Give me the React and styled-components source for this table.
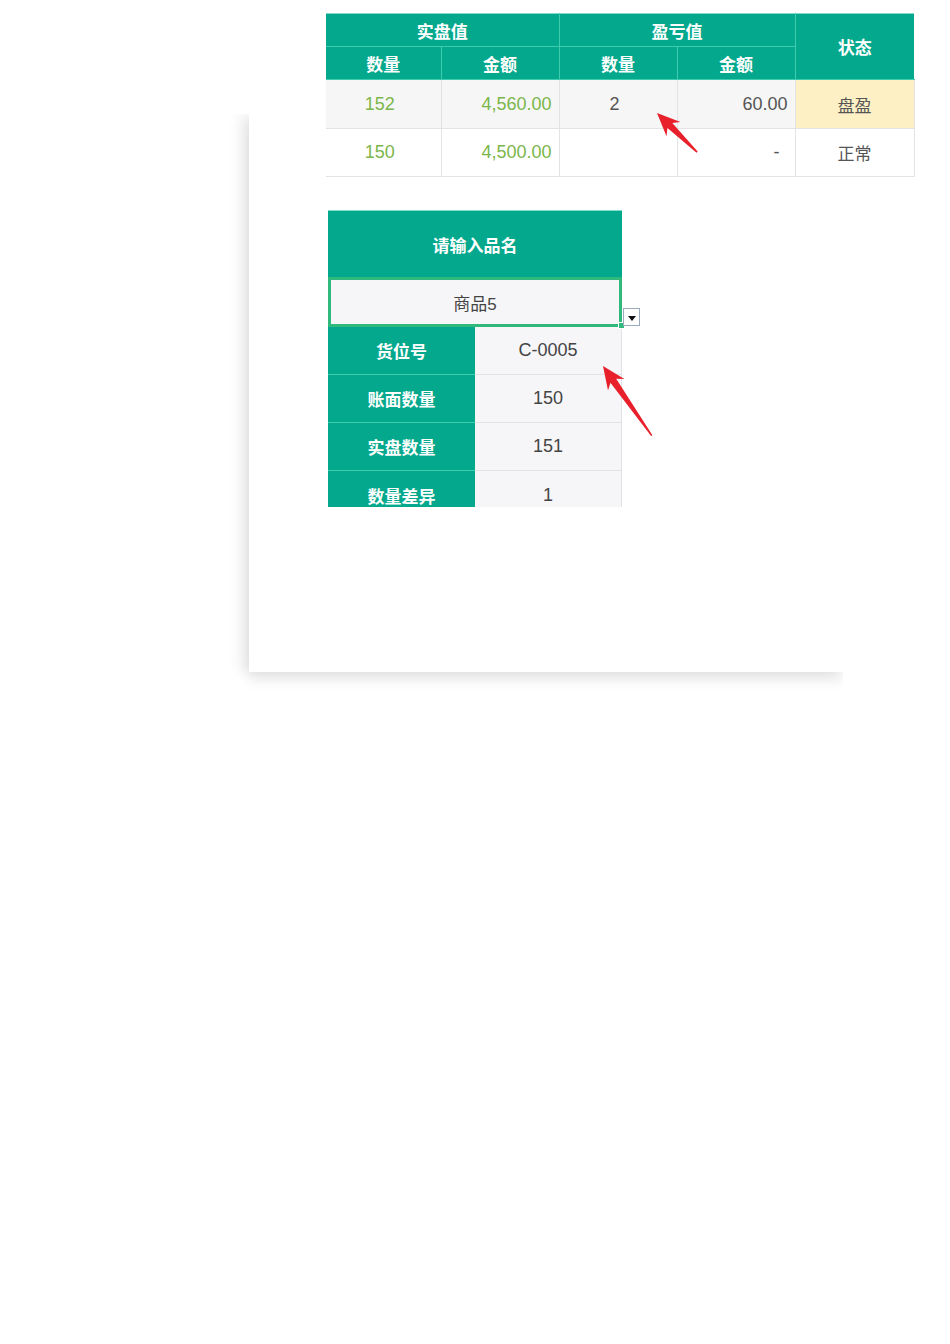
import React from "react"
import styled, { createGlobalStyle } from "styled-components"

const GlobalStyle = createGlobalStyle`
  html, body {
    margin: 0;
    padding: 0;
    background: #ffffff;
  }
  body {
    font-family: "Liberation Sans", "Noto Sans CJK SC", sans-serif;
    color: #555555;
  }
`

const TEAL = "#03a88d"
const TEAL_LINE = "#3fcbb0"
const GRID = "#e3e3e3"

const Stage = styled.div`
  position: relative;
  display: grid;
  width: 950px;
  height: 1344px;
`

const CardLayer = styled.div`
  grid-area: 1 / 1;
  margin: 114px 0 0 249px;
  width: 594px;
  height: 558px;
  background: #ffffff;
  box-shadow: 0 9px 12px rgba(0, 0, 0, 0.08), -9px 0 12px rgba(0, 0, 0, 0.07);
  clip-path: inset(0 0 -40px -40px);
`

const ContentLayer = styled.div`
  grid-area: 1 / 1;
  padding: 13px 0 0 326px;
  display: flex;
  flex-direction: column;
  align-items: flex-start;
  z-index: 1;
`

const SummaryTable = styled.table`
  border-collapse: collapse;
  table-layout: fixed;
  width: 588px;
  font-size: 18px;
  border-top: 1px solid #7fdccb;
`

const HeadCell = styled.th`
  background: ${TEAL};
  color: #ffffff;
  font-weight: bold;
  font-size: 17px;
  font-family: "Noto Sans CJK SC", sans-serif;
  height: 32px;
  padding: 0;
  border: 1px solid ${TEAL_LINE};
  border-top: none;
  &:first-child { border-left: none; }
  &:last-child { border-right: none; }
`

const DataRow = styled.tr`
  background: ${(p) => (p.$shaded ? "#f6f6f6" : "#ffffff")};
`

const DataCell = styled.td`
  height: ${(p) => p.$h || 47}px;
  padding: 0 ${(p) => p.$pr ?? 7}px 0 0;
  border: 1px solid ${GRID};
  border-top: none;
  text-align: ${(p) => p.$align || "center"};
  color: ${(p) => (p.$green ? "#7bb64a" : "#555555")};
  background: ${(p) => p.$bg || "transparent"};
  font-family: "Liberation Sans", "Noto Sans CJK SC", sans-serif;
  font-size: ${(p) => (p.$cjk ? 17 : 18)}px;
  &:first-child { border-left: none; }
`

const LookupTable = styled.div`
  margin: 33px 0 0 2px;
  width: 294px;
  height: 297px;
  display: flex;
  flex-direction: column;
`

const LookupHead = styled.div`
  flex: none;
  height: 67px;
  background: ${TEAL};
  color: #ffffff;
  font-weight: bold;
  font-size: 17px;
  font-family: "Noto Sans CJK SC", sans-serif;
  display: flex;
  align-items: center;
  justify-content: center;
  border-top: 1px solid #7fdccb;
  box-sizing: border-box;
`

const InputWrap = styled.div`
  position: relative;
  flex: none;
`

const InputCell = styled.div`
  height: 50px;
  box-sizing: border-box;
  border: 3px solid #2fb97c;
  background: #f6f6f9;
  color: #444444;
  font-size: 17px;
  font-family: "Liberation Sans", "Noto Sans CJK SC", sans-serif;
  display: flex;
  align-items: center;
  justify-content: center;
`

const Handle = styled.span`
  position: absolute;
  right: -3px;
  bottom: -2px;
  width: 5px;
  height: 5px;
  background: #2fb97c;
  border: 1px solid #ffffff;
`

const DropButton = styled.span`
  position: absolute;
  right: -18px;
  bottom: 1px;
  width: 17px;
  height: 18px;
  box-sizing: border-box;
  background: #ffffff;
  border: 1px solid #9aabbd;
  display: flex;
  align-items: center;
  justify-content: center;
  &::after {
    content: "";
    border-left: 4px solid transparent;
    border-right: 4px solid transparent;
    border-top: 5px solid #111111;
    margin-top: 2px;
  }
`

const Rows = styled.div`
  flex: 1;
  overflow: hidden;
`

const InfoRow = styled.div`
  display: grid;
  grid-template-columns: 147px 147px;
  height: 48px;
`

const InfoLabel = styled.div`
  background: ${TEAL};
  color: #ffffff;
  font-weight: bold;
  font-size: 17px;
  font-family: "Noto Sans CJK SC", sans-serif;
  display: flex;
  align-items: center;
  justify-content: center;
  border-bottom: ${(p) => (p.$last ? "none" : `1px solid ${TEAL_LINE}`)};
  box-sizing: border-box;
`

const InfoValue = styled.div`
  background: #f6f6f9;
  color: #444444;
  font-size: 18px;
  display: flex;
  align-items: center;
  justify-content: center;
  border-bottom: ${(p) => (p.$last ? "none" : `1px solid ${GRID}`)};
  border-right: 1px solid ${GRID};
  box-sizing: border-box;
`

const Arrow = styled.svg`
  position: absolute;
  left: ${(p) => p.$x}px;
  top: ${(p) => p.$y}px;
  z-index: 2;
  overflow: visible;
`

// red pointer drawn along +x from tip (0,0), then rotated
const Pointer = ({ x, y, len, angle }) => (
  <Arrow $x={x} $y={y} width="1" height="1">
    <g transform={`rotate(${angle})`}>
      <polygon
        points={`0,0 23,-10 18,-3.5 ${len},-0.8 ${len},0.8 18,3.5 23,10`}
        fill="#e8202b"
      />
    </g>
  </Arrow>
)

const info = [
  { label: "货位号", value: "C-0005" },
  { label: "账面数量", value: "150" },
  { label: "实盘数量", value: "151" },
  { label: "数量差异", value: "1", last: true },
]

export default function App() {
  return (
    <>
      <GlobalStyle />
      <Stage>
        <CardLayer />
        <ContentLayer>
          <SummaryTable>
            <colgroup>
              <col style={{ width: 115 }} />
              <col style={{ width: 118 }} />
              <col style={{ width: 118 }} />
              <col style={{ width: 118 }} />
              <col style={{ width: 119 }} />
            </colgroup>
            <thead>
              <tr>
                <HeadCell colSpan={2}>实盘值</HeadCell>
                <HeadCell colSpan={2}>盈亏值</HeadCell>
                <HeadCell rowSpan={2}>状态</HeadCell>
              </tr>
              <tr>
                <HeadCell>数量</HeadCell>
                <HeadCell>金额</HeadCell>
                <HeadCell>数量</HeadCell>
                <HeadCell>金额</HeadCell>
              </tr>
            </thead>
            <tbody>
              <DataRow $shaded>
                <DataCell $green $h={48}>152</DataCell>
                <DataCell $green $align="right">4,560.00</DataCell>
                <DataCell>2</DataCell>
                <DataCell $align="right">60.00</DataCell>
                <DataCell $bg="#fdf0c4" $pr={0} $cjk>盘盈</DataCell>
              </DataRow>
              <DataRow>
                <DataCell $green>150</DataCell>
                <DataCell $green $align="right">4,500.00</DataCell>
                <DataCell></DataCell>
                <DataCell $align="right" $pr={15}>-</DataCell>
                <DataCell $pr={0} $cjk>正常</DataCell>
              </DataRow>
            </tbody>
          </SummaryTable>

          <LookupTable>
            <LookupHead>请输入品名</LookupHead>
            <InputWrap>
              <InputCell>商品5</InputCell>
              <Handle />
              <DropButton />
            </InputWrap>
            <Rows>
              {info.map((row) => (
                <InfoRow key={row.label}>
                  <InfoLabel $last={row.last}>{row.label}</InfoLabel>
                  <InfoValue $last={row.last}>{row.value}</InfoValue>
                </InfoRow>
              ))}
            </Rows>
          </LookupTable>
        </ContentLayer>
        <Pointer x={657} y={113} len={56} angle={44.3} />
        <Pointer x={603} y={366} len={85} angle={55} />
      </Stage>
    </>
  )
}
